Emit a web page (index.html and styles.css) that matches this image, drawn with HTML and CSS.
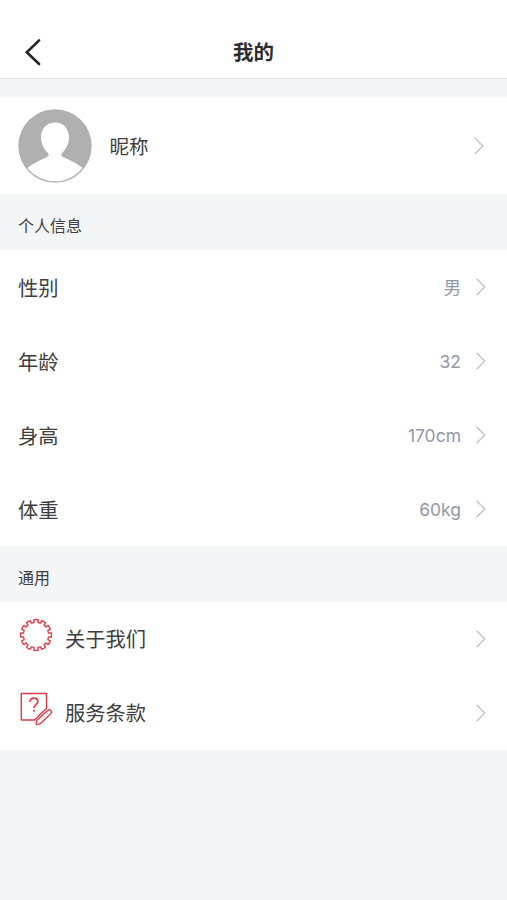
FILE: index.html
```html
<!DOCTYPE html>
<html lang="zh-CN">
<head>
<meta charset="UTF-8">
<meta name="viewport" content="width=device-width, initial-scale=1">
<title>我的</title>
<link rel="stylesheet" href="styles.css">
</head>
<body>
<svg class="defs" aria-hidden="true">
  <symbol id="chevron" viewBox="0 0 12 20"><path d="M1.6 1.8 9.8 10 1.6 18.2"/></symbol>
</svg>
<header class="navbar">
  <svg class="back" viewBox="0 0 18 28"><path d="M15.1 2.4 2.8 14.2 15.1 26"/></svg>
  <h1>我的</h1>
</header>
<main>
  <section class="group">
    <div class="profile">
      <svg class="avatar" viewBox="0 0 74 74">
        <circle cx="37" cy="37" r="36.700" fill="#b0b0b0"/>
        <path fill="#fff" d="M37 13.500c8 0 14 6 14 14.500 0 7-3 12-6.500 15.600-1.700 2-1.500 3.600.8 4.700C51.800 51.400 59 54.500 64.600 59A35.300 35.300 0 0 1 9.400 59C15 54.500 22.200 51.400 28.700 48.300c2.300-1.100 2.500-2.700.8-4.700C26 40 23 35 23 28c0-8.500 6-14.500 14-14.500z"/>
      </svg>
      <span class="name">昵称</span>
      <svg class="chevron"><use href="#chevron"/></svg>
    </div>
  </section>
  <h2>个人信息</h2>
  <section class="group">
    <div class="row"><span class="label">性别</span><span class="value value-text">男</span><svg class="chevron"><use href="#chevron"/></svg></div>
    <div class="row"><span class="label">年龄</span><span class="value">32</span><svg class="chevron"><use href="#chevron"/></svg></div>
    <div class="row"><span class="label">身高</span><span class="value">170cm</span><svg class="chevron"><use href="#chevron"/></svg></div>
    <div class="row"><span class="label">体重</span><span class="value">60kg</span><svg class="chevron"><use href="#chevron"/></svg></div>
  </section>
  <h2>通用</h2>
  <section class="group">
    <div class="row">
      <svg class="icon" viewBox="-18 -18 36 36">
        <path id="tooth" d="M-3.290-12.270-1.990-12.540-2.160-15.350Q0-15.650 2.160-15.350L1.990-12.540 3.290-12.270"/>
        <use href="#tooth" transform="rotate(30)"/>
        <use href="#tooth" transform="rotate(60)"/>
        <use href="#tooth" transform="rotate(90)"/>
        <use href="#tooth" transform="rotate(120)"/>
        <use href="#tooth" transform="rotate(150)"/>
        <use href="#tooth" transform="rotate(180)"/>
        <use href="#tooth" transform="rotate(210)"/>
        <use href="#tooth" transform="rotate(240)"/>
        <use href="#tooth" transform="rotate(270)"/>
        <use href="#tooth" transform="rotate(300)"/>
        <use href="#tooth" transform="rotate(330)"/>
      </svg>
      <span class="label label-icon">关于我们</span>
      <svg class="chevron"><use href="#chevron"/></svg>
    </div>
    <div class="row">
      <svg class="icon" viewBox="0 0 36 36">
        <path d="M3.300 2.500H28.500V17.500L16.500 29H3.300z"/>
        <path stroke-width="1.700" d="M12 11c0-2.500 1.600-3.900 3.900-3.900s3.900 1.400 3.900 3.500c0 3.100-3.900 3.200-3.900 6.600M15.900 18.800v2"/>
        <path d="M18.900 29.300 29.700 19.600a2 2 0 0 1 3.200 2.900L22.800 32.300l-3.400 1.300q-1.500.2-1.300-1.300z"/>
      </svg>
      <span class="label label-icon">服务条款</span>
      <svg class="chevron"><use href="#chevron"/></svg>
    </div>
  </section>
</main>
</body>
</html>
```
FILE: styles.css
```css
* { box-sizing: border-box; }

body {
  margin: 0;
  min-height: 100vh;
  background: #f3f5f7;
  color: #3e3e40;
  font-family: Inter, "Noto Sans CJK SC", sans-serif;
}

.defs {
  display: block;
  width: 0;
  height: 0;
}

.navbar {
  display: grid;
  grid-template-columns: 60px 1fr 60px;
  align-items: center;
  height: 79px;
  padding-top: 25px;
  background: #fff;
  border-bottom: 1px solid #e4e6e8;
}

.back {
  width: 18px;
  height: 28px;
  margin-left: 24px;
  fill: none;
  stroke: #252525;
  stroke-width: 2.6;
  stroke-linecap: round;
}

h1 {
  margin: 0;
  padding-top: 2px;
  color: #2d2d30;
  font-size: 20.5px;
  font-weight: 700;
  line-height: 28px;
  text-align: center;
}

main { padding-top: 18px; }

.group { background: #fff; }

.profile {
  display: flex;
  align-items: center;
  height: 97px;
  padding: 0 22px 0 18px;
}

.avatar {
  width: 74px;
  height: 74px;
}

.name {
  flex: 1;
  margin-left: 17.5px;
  padding-top: 3px;
  font-size: 19.500px;
  line-height: 28px;
}

.chevron {
  flex: none;
  width: 12px;
  height: 20px;
  fill: none;
  stroke: #c4c4c6;
  stroke-width: 1.4;
}

h2 {
  display: flex;
  align-items: center;
  height: 56px;
  margin: 0;
  padding: 6px 18px 0;
  font-size: 16px;
  font-weight: 400;
}

.row {
  display: flex;
  align-items: center;
  height: 74px;
  padding: 0 20px 0 18px;
}

.label {
  flex: 1;
  padding-top: 3px;
  font-size: 20.300px;
  line-height: 30px;
}

.label-icon { padding-top: 1px; }

.value {
  margin-right: 14px;
  color: #9297a9;
  font-size: 17.500px;
}

.value-text {
  font-family: "Noto Sans CJK SC", sans-serif;
  line-height: 24px;
}

.icon {
  width: 36px;
  height: 36px;
  margin: -8px 11px 0 0;
  fill: none;
  stroke: #df3d45;
  stroke-width: 1.400;
  stroke-linejoin: round;
}
```
